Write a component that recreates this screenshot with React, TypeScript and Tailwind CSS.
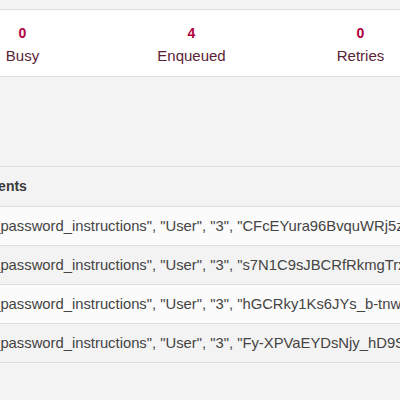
import React from 'react';

const stats = [
  { value: '0', label: 'Busy' },
  { value: '4', label: 'Enqueued' },
  { value: '0', label: 'Retries' },
];

const rows = [
  'CFcEYura96BvquWRj5zx',
  's7N1C9sJBCRfRkmgTrxy',
  'hGCRky1Ks6JYs_b-tnwq',
  'Fy-XPVaEYDsNjy_hD9Sk',
];

export default function App() {
  return (
    <div
      className="w-[400px] h-[400px] overflow-hidden bg-[#f3f3f3] text-[14px]"
      style={{ fontFamily: '"Liberation Sans", Arial, sans-serif' }}
    >
      <div className="h-[9px]" />
      <div className="bg-white border-y border-[#dcdcdc] pt-[13px] pb-[10px]">
        <div className="flex ml-[-62px]">
          {stats.map(s => (
            <div key={s.label} className="w-[169px] shrink-0 flex flex-col items-center">
              <span className="font-bold text-[#b1003e] leading-[20px]">{s.value}</span>
              <span className="mt-[3px] text-[15px] text-[#5a2437] leading-[20px]">{s.label}</span>
            </div>
          ))}
        </div>
      </div>
      <div className="h-[89px]" />
      <div className="border-t border-[#dddddd]">
        <div className="h-[40px] flex items-center overflow-hidden whitespace-nowrap border-b border-[#dddddd]">
          <span className="ml-[-47px] font-bold text-[#3a3a3a]">Arguments</span>
        </div>
        {rows.map((jid, i) => (
          <div
            key={jid}
            className={`h-[39px] flex items-center overflow-hidden whitespace-nowrap border-b border-[#dddddd] ${
              i % 2 === 0 ? 'bg-[#fbfbfb]' : 'bg-[#f3f3f3]'
            }`}
          >
            <span className="ml-[-46px] text-[14.8px] text-[#444]">
              "reset_password_instructions", "User", "3", "{jid}"
            </span>
          </div>
        ))}
      </div>
    </div>
  );
}
